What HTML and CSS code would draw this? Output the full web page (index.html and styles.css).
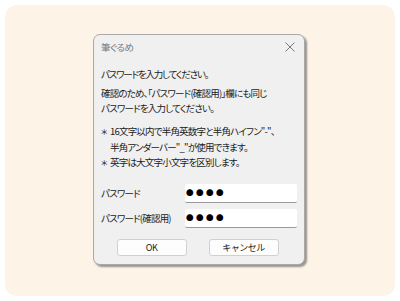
FILE: index.html
```html
<!DOCTYPE html>
<html lang="ja">
<head>
    <meta charset="UTF-8">
    <title>筆ぐるめ</title>
    <link rel="stylesheet" href="styles.css">
</head>
<body>
    <div class="panel">
        <div class="dialog">
            <div class="titlebar">
                <span class="title">筆ぐるめ</span>
                <svg class="close" width="10" height="10" viewBox="0 0 10 10">
                    <path d="M0.5 0.5 L9.5 9.5 M9.5 0.5 L0.5 9.5" stroke="#7a7a7a" stroke-width="1" fill="none"/>
                </svg>
            </div>
            <div class="content">
                <p class="msg">パスワードを入力してください。</p>
                <p class="msg">確認のため、「パスワード(確認用)」欄にも同じ<br>パスワードを入力してください。</p>
                <ul class="notes">
                    <li>16文字以内で半角英数字と半角ハイフン"-"、<br>半角アンダーバー"_"が使用できます。</li>
                    <li>英字は大文字小文字を区別します。</li>
                </ul>
                <div class="form">
                    <div class="row">
                        <label>パスワード</label>
                        <div class="input">●●●●</div>
                    </div>
                    <div class="row">
                        <label>パスワード(確認用)</label>
                        <div class="input">●●●●</div>
                    </div>
                </div>
                <div class="buttons">
                    <button>OK</button>
                    <button>キャンセル</button>
                </div>
            </div>
        </div>
    </div>
</body>
</html>
```

FILE: styles.css
```css
body {
    margin: 0;
    background: #ffffff;
    font-family: "Noto Sans CJK JP", "Noto Sans", sans-serif;
    font-feature-settings: "palt";
    color: #1a1a1a;
}
.panel {
    margin: 5px;
    height: 291px;
    border-radius: 12px;
    background: #fdf3e6;
    padding: 29px 0 0 88px;
    box-sizing: border-box;
}
.dialog {
    width: 212px;
    height: 231px;
    box-sizing: border-box;
    background: #f0f0f0;
    border: 1px solid #a9a9a9;
    border-radius: 7px;
    box-shadow: 2px 2px 2px rgba(0,0,0,0.4);
    display: flex;
    flex-direction: column;
}
.titlebar {
    height: 24px;
    display: flex;
    align-items: center;
    justify-content: space-between;
    padding: 0 9px 0 7px;
}
.title {
    font-size: 9.5px;
    letter-spacing: -0.5px;
    color: #7a7a7a;
}
.content {
    padding: 8px 7px 0 7px;
    font-size: 9.5px;
    letter-spacing: -0.8px;
}
.msg {
    margin: 0 0 4px 0;
    line-height: 15px;
}
.msg:first-child {
    letter-spacing: -1.2px;
}
.notes {
    list-style: none;
    margin: 8px 0 0 0;
    padding: 0 0 0 9px;
    line-height: 15.5px;
}
.notes li {
    position: relative;
}
.notes li::before {
    content: "＊";
    position: absolute;
    left: -9px;
    font-size: 8px;
}
.form {
    margin-top: 13px;
    display: flex;
    flex-direction: column;
    gap: 6px;
}
.row {
    display: flex;
    align-items: center;
    justify-content: space-between;
}
.input {
    width: 112px;
    height: 19px;
    box-sizing: border-box;
    background: #ffffff;
    border-bottom: 1px solid #9a9a9a;
    border-radius: 2px;
    padding-left: 1px;
    font-size: 7.5px;
    line-height: 18px;
    letter-spacing: 2.5px;
    font-feature-settings: normal;
    color: #000;
}
.buttons {
    display: flex;
    justify-content: center;
    gap: 22px;
    margin-top: 11px;
    padding-right: 3px;
}
button {
    width: 70px;
    height: 17px;
    padding: 0;
    background: #fdfdfd;
    border: 1px solid #d0d0d0;
    border-radius: 3px;
    font-family: inherit;
    font-size: 9px;
    letter-spacing: -0.5px;
    color: #1a1a1a;
}
```
